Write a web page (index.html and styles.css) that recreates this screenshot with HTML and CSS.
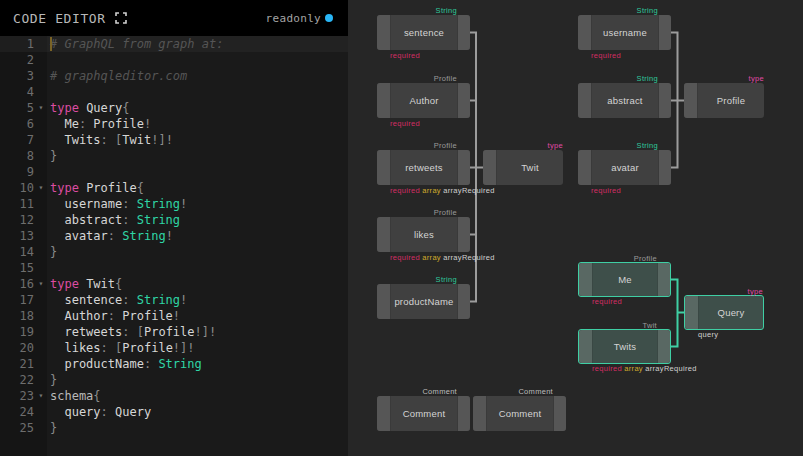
FILE: index.html
```html
<!DOCTYPE html>
<html>
<head>
<meta charset="utf-8">
<link rel="stylesheet" href="styles.css">
</head>
<body>
<div class="app">
  <section class="editor">
    <header class="head">
      <div class="title">CODE EDITOR
        <svg class="fs" width="12" height="12" viewBox="0 0 12 12"><path d="M1 4V1H4M8 1H11V4M11 8V11H8M4 11H1V8" fill="none" stroke="#cfcfcf" stroke-width="1.6"/></svg>
      </div>
      <div class="ro">readonly <span class="dot"></span></div>
    </header>
    <div class="code">
      <div class="line active"><span class="ln">1</span><span class="fold"></span><span class="src"><span class="c"># GraphQL from graph at:</span></span></div>
      <div class="line"><span class="ln">2</span><span class="fold"></span><span class="src"></span></div>
      <div class="line"><span class="ln">3</span><span class="fold"></span><span class="src"><span class="c"># graphqleditor.com</span></span></div>
      <div class="line"><span class="ln">4</span><span class="fold"></span><span class="src"></span></div>
      <div class="line"><span class="ln">5</span><span class="fold">▾</span><span class="src"><span class="k">type</span> Query<span class="p">{</span></span></div>
      <div class="line"><span class="ln">6</span><span class="fold"></span><span class="src">  Me<span class="p">:</span> Profile<span class="p">!</span></span></div>
      <div class="line"><span class="ln">7</span><span class="fold"></span><span class="src">  Twits<span class="p">:</span> <span class="p">[</span>Twit<span class="p">!]!</span></span></div>
      <div class="line"><span class="ln">8</span><span class="fold"></span><span class="src"><span class="p">}</span></span></div>
      <div class="line"><span class="ln">9</span><span class="fold"></span><span class="src"></span></div>
      <div class="line"><span class="ln">10</span><span class="fold">▾</span><span class="src"><span class="k">type</span> Profile<span class="p">{</span></span></div>
      <div class="line"><span class="ln">11</span><span class="fold"></span><span class="src">  username<span class="p">:</span> <span class="s">String</span><span class="p">!</span></span></div>
      <div class="line"><span class="ln">12</span><span class="fold"></span><span class="src">  abstract<span class="p">:</span> <span class="s">String</span></span></div>
      <div class="line"><span class="ln">13</span><span class="fold"></span><span class="src">  avatar<span class="p">:</span> <span class="s">String</span><span class="p">!</span></span></div>
      <div class="line"><span class="ln">14</span><span class="fold"></span><span class="src"><span class="p">}</span></span></div>
      <div class="line"><span class="ln">15</span><span class="fold"></span><span class="src"></span></div>
      <div class="line"><span class="ln">16</span><span class="fold">▾</span><span class="src"><span class="k">type</span> Twit<span class="p">{</span></span></div>
      <div class="line"><span class="ln">17</span><span class="fold"></span><span class="src">  sentence<span class="p">:</span> <span class="s">String</span><span class="p">!</span></span></div>
      <div class="line"><span class="ln">18</span><span class="fold"></span><span class="src">  Author<span class="p">:</span> Profile<span class="p">!</span></span></div>
      <div class="line"><span class="ln">19</span><span class="fold"></span><span class="src">  retweets<span class="p">:</span> <span class="p">[</span>Profile<span class="p">!]!</span></span></div>
      <div class="line"><span class="ln">20</span><span class="fold"></span><span class="src">  likes<span class="p">:</span> <span class="p">[</span>Profile<span class="p">!]!</span></span></div>
      <div class="line"><span class="ln">21</span><span class="fold"></span><span class="src">  productName<span class="p">:</span> <span class="s">String</span></span></div>
      <div class="line"><span class="ln">22</span><span class="fold"></span><span class="src"><span class="p">}</span></span></div>
      <div class="line"><span class="ln">23</span><span class="fold">▾</span><span class="src"><span class="m">schema</span><span class="p">{</span></span></div>
      <div class="line"><span class="ln">24</span><span class="fold"></span><span class="src">  query<span class="p">:</span> Query</span></div>
      <div class="line"><span class="ln">25</span><span class="fold"></span><span class="src"><span class="p">}</span></span></div>
      <div class="filler"><span class="gut"></span></div>
    </div>
  </section>
  <section class="canvas">
    <svg class="wires" width="455" height="456" viewBox="0 0 455 456">
      <g stroke="#9c9c9c" stroke-width="2" fill="none">
        <path d="M122 32.5H128M122 100.5H128M122 167.5H135M122 234.5H128M122 301.5H128M128 31.5V302.5"/>
        <path d="M323 32.5H329.5M323 100.5H336M323 167.5H329.5M329.5 31.5V168.5"/>
      </g>
      <g stroke="#3fcfa4" stroke-width="2" fill="none">
        <path d="M323 279.5H329.5M323 346.5H329.5M329.5 312.5H336M329.5 278.5V347.5"/>
      </g>
    </svg>

    <div class="node" style="left:29px;top:15px"><i class="h"></i><b>sentence</b><i class="h"></i>
      <span class="tl str">String</span><span class="bl"><em class="req">required</em></span></div>
    <div class="node" style="left:29px;top:83px"><i class="h"></i><b>Author</b><i class="h"></i>
      <span class="tl gr">Profile</span><span class="bl"><em class="req">required</em></span></div>
    <div class="node" style="left:29px;top:150px"><i class="h"></i><b>retweets</b><i class="h"></i>
      <span class="tl gr">Profile</span><span class="bl"><em class="req">required</em> <em class="arr">array</em> <em class="arq">arrayRequired</em></span></div>
    <div class="node" style="left:29px;top:217px"><i class="h"></i><b>likes</b><i class="h"></i>
      <span class="tl gr">Profile</span><span class="bl"><em class="req">required</em> <em class="arr">array</em> <em class="arq">arrayRequired</em></span></div>
    <div class="node" style="left:29px;top:284px"><i class="h"></i><b>productName</b><i class="h"></i>
      <span class="tl str">String</span></div>
    <div class="node type" style="left:135px;top:150px"><i class="h"></i><b>Twit</b>
      <span class="tl ty">type</span></div>

    <div class="node" style="left:230px;top:15px"><i class="h"></i><b>username</b><i class="h"></i>
      <span class="tl str">String</span><span class="bl"><em class="req">required</em></span></div>
    <div class="node" style="left:230px;top:83px"><i class="h"></i><b>abstract</b><i class="h"></i>
      <span class="tl str">String</span></div>
    <div class="node" style="left:230px;top:150px"><i class="h"></i><b>avatar</b><i class="h"></i>
      <span class="tl str">String</span><span class="bl"><em class="req">required</em></span></div>
    <div class="node type" style="left:336px;top:83px"><i class="h"></i><b>Profile</b>
      <span class="tl ty">type</span></div>

    <div class="node on" style="left:230px;top:262px"><i class="h"></i><b>Me</b><i class="h"></i>
      <span class="tl gr">Profile</span><span class="bl"><em class="req">required</em></span></div>
    <div class="node on" style="left:230px;top:329px"><i class="h"></i><b>Twits</b><i class="h"></i>
      <span class="tl gr">Twit</span><span class="bl"><em class="req">required</em> <em class="arr">array</em> <em class="arq">arrayRequired</em></span></div>
    <div class="node type on" style="left:336px;top:295px"><i class="h"></i><b>Query</b>
      <span class="tl ty">type</span><span class="bl"><em class="arq">query</em></span></div>

    <div class="node" style="left:29px;top:396px"><i class="h"></i><b>Comment</b><i class="h"></i>
      <span class="tl cm">Comment</span></div>
    <div class="node" style="left:125px;top:396px"><i class="h"></i><b>Comment</b><i class="h"></i>
      <span class="tl cm">Comment</span></div>
  </section>
</div>
</body>
</html>
```
FILE: styles.css
```css
html, body {
  margin: 0;
  padding: 0;
  background: #262626;
}
.app {
  display: flex;
  width: 803px;
  height: 456px;
  overflow: hidden;
}
.editor {
  width: 348px;
  flex: none;
  display: flex;
  flex-direction: column;
  background: #1a1a1a;
}
.head {
  height: 36px;
  flex: none;
  background: #000;
  display: flex;
  align-items: center;
  justify-content: space-between;
  padding: 0 15px 0 13px;
}
.title {
  font-family: "DejaVu Sans Mono", monospace;
  font-size: 13px;
  letter-spacing: 0.6px;
  color: #b8b8b8;
  display: flex;
  align-items: center;
  gap: 9px;
}
.ro {
  font-family: "DejaVu Sans Mono", monospace;
  font-size: 11px;
  letter-spacing: 0.3px;
  color: #a4a4a4;
  display: flex;
  align-items: center;
  gap: 4px;
}
.dot {
  width: 8px;
  height: 8px;
  border-radius: 50%;
  background: #29b6f6;
}
.code {
  flex: 1;
  display: flex;
  flex-direction: column;
  font-family: "DejaVu Sans Mono", monospace;
  font-size: 12px;
}
.line {
  display: flex;
  height: 16px;
  line-height: 16px;
  white-space: pre;
}
.ln {
  width: 34px;
  flex: none;
  text-align: right;
  color: #6e6e6e;
  background: #151515;
}
.fold {
  width: 13px;
  flex: none;
  background: #151515;
  color: #777;
  font-size: 8px;
  text-align: center;
  padding-left: 1px;
  box-sizing: border-box;
}
.src {
  flex: 1;
  padding-left: 3px;
  color: #d6d6d6;
  position: relative;
}
.line.active .ln, .line.active .fold { background: #1e1e1e; }
.line.active .src { background: #222; }
.line.active .src::before {
  content: "";
  position: absolute;
  left: 3px;
  top: 1px;
  width: 2px;
  height: 14px;
  background: #7a6326;
}
.filler {
  flex: 1;
  display: flex;
}
.gut {
  width: 47px;
  background: #151515;
}
.c { color: #555; font-style: italic; }
.k { color: #db4ca1; }
.p { color: #8c8c8c; }
.s { color: #2fd6a6; }
.m { color: #b9b9b9; }

.canvas {
  flex: 1;
  position: relative;
  background: #262626;
}
.wires {
  position: absolute;
  left: 0;
  top: 0;
}
.node {
  position: absolute;
  width: 93px;
  height: 35px;
  box-sizing: border-box;
  display: flex;
  border-radius: 3px;
  overflow: visible;
  background: #404040;
}
.node.type { width: 80px; }
.node .h {
  width: 13px;
  flex: none;
  background: #565656;
}
.node .h:first-child { border-radius: 3px 0 0 3px; border-right: 1px solid #3a3a3a; }
.node .h:nth-of-type(2) { width: 12px; border-radius: 0 3px 3px 0; border-left: 1px solid #3a3a3a; }
.node b {
  flex: 1;
  display: flex;
  align-items: center;
  justify-content: center;
  font-family: "Liberation Sans", sans-serif;
  font-weight: normal;
  font-size: 9.5px;
  color: #d4d4d4;
  letter-spacing: 0.2px;
}
.node.on {
  border: 1px solid #3fcfa4;
  background: #3e4f4a;
}
.node.on .h { background: #596863; }
.node.on .h:first-child { border-right-color: #3a4844; }
.node.on .h:nth-of-type(2) { border-left-color: #3a4844; }
.tl, .bl {
  position: absolute;
  font-family: "Liberation Sans", sans-serif;
  font-size: 7.5px;
  line-height: 9px;
  white-space: nowrap;
  letter-spacing: 0.3px;
}
.tl { right: 13px; bottom: 100%; }
.node.type .tl { right: 0; }
.bl { left: 13px; top: 100%; margin-top: 1px; }
.bl em { font-style: normal; }
.str { color: #2fc99c; }
.gr { color: #9a9a9a; }
.ty { color: #e04aa6; }
.cm { color: #bcbcbc; }
.req { color: #d22d63; }
.arr { color: #d1aa2c; }
.arq { color: #d0d0d0; }
```
